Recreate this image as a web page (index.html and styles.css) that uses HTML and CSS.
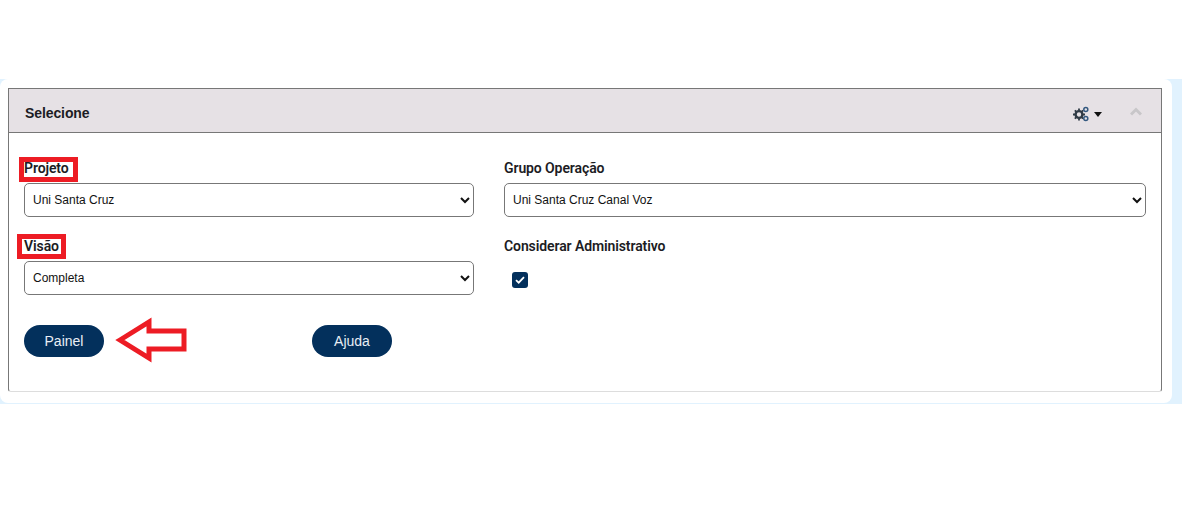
FILE: index.html
```html
<!DOCTYPE html>
<html lang="pt">
<head>
<meta charset="utf-8">
<title>Selecione</title>
<link rel="stylesheet" href="styles.css">
</head>
<body>
<div class="shell">
  <div class="panel">
  <section class="card">
    <header class="card-head">
      <h2 class="card-title">Selecione</h2>
      <div class="tools">
        <svg class="gears" width="16" height="16" viewBox="0 0 16 16">
          <g fill="none">
            <circle cx="6" cy="8.5" r="3.4" stroke="#2f3a45" stroke-width="2.4"/>
            <path d="M6 2.6v2M6 12.4v2M0 8.5h2M10 8.5h2M1.8 4.3l1.4 1.4M10.2 4.3L8.8 5.7M1.8 12.7l1.4-1.4M10.2 12.7l-1.4-1.4" stroke="#2f3a45" stroke-width="1.8"/>
            <circle cx="12.8" cy="3.4" r="2" stroke="#33587f" stroke-width="1.5"/>
            <circle cx="12.8" cy="12.4" r="2" stroke="#33587f" stroke-width="1.5"/>
          </g>
        </svg>
        <span class="caret"></span>
        <svg class="collapse" width="12" height="9" viewBox="0 0 12 9"><path d="M1 7.5l5-5 5 5" fill="none" stroke="#c8c6c9" stroke-width="3"/></svg>
      </div>
    </header>
    <div class="card-body">
      <form class="fields">
        <div class="field">
          <label class="label"><span class="mark mark-projeto">Projeto</span></label>
          <select class="select"><option>Uni Santa Cruz</option></select>
        </div>
        <div class="field">
          <label class="label">Grupo Operação</label>
          <select class="select"><option>Uni Santa Cruz Canal Voz</option></select>
        </div>
        <div class="field">
          <label class="label"><span class="mark mark-visao">Visão</span></label>
          <select class="select"><option>Completa</option></select>
        </div>
        <div class="field">
          <label class="label">Considerar Administrativo</label>
          <span class="check">
            <svg width="10" height="8" viewBox="0 0 10 8"><path d="M1 4.2l2.7 2.5L9 1.2" fill="none" stroke="#fff" stroke-width="1.8"/></svg>
          </span>
        </div>
      </form>
      <div class="actions">
        <button type="button" class="btn">Painel</button>
        <svg class="arrow" width="74" height="48" viewBox="0 0 74 48">
          <path d="M6 24L35 6v9h35v18H35v9z" fill="#fff" stroke="#ed1c24" stroke-width="5"/>
        </svg>
        <button type="button" class="btn btn-help">Ajuda</button>
      </div>
    </div>
  </section>
  </div>
</div>
</body>
</html>
```
FILE: styles.css
```css
* { box-sizing: border-box; }
html, body { margin: 0; padding: 0; background: #fff; }
body { height: 530px; padding-top: 79px; overflow: hidden; font-family: "Liberation Sans", Arial, sans-serif; }
.shell { height: 325px; background: #e1f2fe; padding: 0 10px 1px 0; }
.panel { height: 324px; background: #fff; border-radius: 8px; padding: 9px 10px 12px 8px; }
.card { width: 1154px; height: 304px; border: 1px solid #777; border-bottom-color: #ddd; border-radius: 0 0 3px 3px; background: #fff; }
.card-head {
  height: 44px;
  background: #e6e1e5;
  border-bottom: 1px solid #777;
  display: flex;
  align-items: center;
  justify-content: space-between;
  padding: 0 19px 0 16px;
}
.card-title { margin: 5px 0 0; font-size: 14px; font-weight: 700; color: #1c1c24; letter-spacing: -0.1px; }
.tools { display: flex; align-items: flex-start; height: 16px; }
.gears { margin: 3px 5px 0 0; }
.caret { width: 0; height: 0; border: 4.5px solid transparent; border-top: 5px solid #111; border-bottom: 0; margin: 9px 28px 0 0; }
.collapse { margin-top: 4px; }
.card-body { padding: 0 15px; }
.fields { display: grid; grid-template-columns: 450px 642px; column-gap: 30px; padding-top: 25px; }
.field { height: 78px; }
.label { display: block; height: 25px; font-family: Roboto, "Liberation Sans", Arial, sans-serif; font-size: 14px; font-weight: 600; color: #1c1c24; line-height: 21px; letter-spacing: -0.1px; }
.mark { display: inline-block; outline: 5px solid #ed1c24; height: 15px; vertical-align: top; }
.mark-projeto { margin-top: 4px; padding-right: 4px; line-height: 13px; }
.mark-visao { margin: 3px 0 0 -2px; padding: 0 2px; line-height: 15px; }
.select {
  display: block;
  width: 100%;
  height: 34px;
  font-family: "Liberation Sans", Arial, sans-serif;
  font-size: 12px;
  color: #111;
  background: #fff;
  border: 1px solid #777;
  border-radius: 5px;
  padding: 0 4px;
}
.check { display: flex; align-items: center; justify-content: center; width: 16px; height: 16px; margin: 11px 0 0 8px; border-radius: 3px; background: #03305c; }
.actions { display: flex; align-items: center; margin-top: 11px; height: 32px; position: relative; }
.btn {
  width: 80px;
  height: 32px;
  border: 0;
  border-radius: 16px;
  background: #03305c;
  color: #e8eef5;
  font-family: "Liberation Sans", Arial, sans-serif;
  font-size: 14px;
  padding: 0;
}
.btn-help { margin-left: 208px; }
.arrow { position: absolute; left: 90px; top: -9px; }
```
